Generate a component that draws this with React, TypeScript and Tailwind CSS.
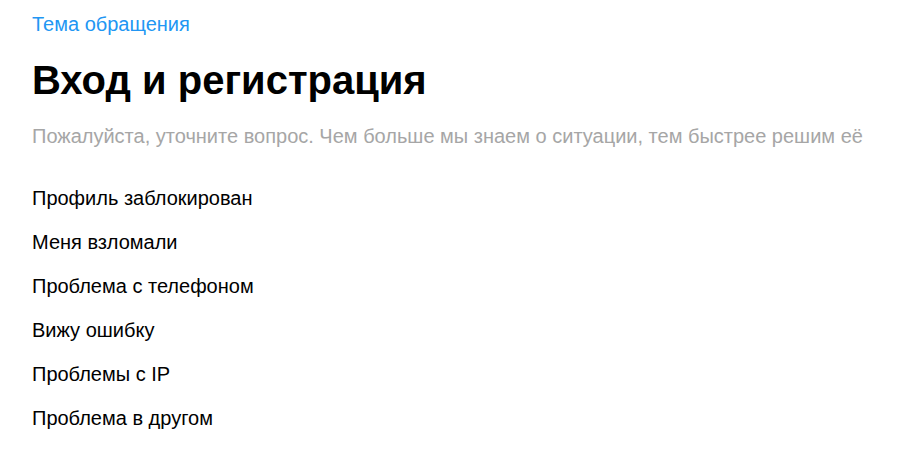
const topics = [
  "Профиль заблокирован",
  "Меня взломали",
  "Проблема с телефоном",
  "Вижу ошибку",
  "Проблемы с IP",
  "Проблема в другом",
];

export default function App() {
  return (
    <div className="min-h-screen bg-white px-8 pt-3 font-['Liberation_Sans',Arial,sans-serif]">
      <a href="#" className="block text-[20px] leading-6 text-[#2196f3]">
        Тема обращения
      </a>
      <h1 className="mt-5 text-[40px] font-bold leading-[48px] text-black">Вход и регистрация</h1>
      <p className="mt-5 text-[20px] leading-6 text-[#a6a6a6]">
        Пожалуйста, уточните вопрос. Чем больше мы знаем о ситуации, тем быстрее решим её
      </p>
      <ul className="mt-[38px] flex flex-col gap-5">
        {topics.map((topic) => (
          <li key={topic} className="text-[20px] leading-6 text-black">
            {topic}
          </li>
        ))}
      </ul>
    </div>
  );
}
